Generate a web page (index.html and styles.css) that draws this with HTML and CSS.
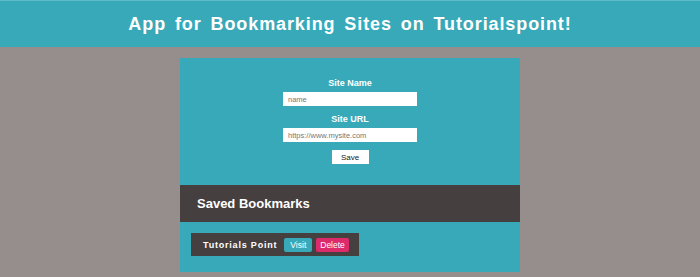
FILE: index.html
```html
<!DOCTYPE html>
<html lang="en">
<head>
    <meta charset="UTF-8">
    <meta name="viewport" content="width=device-width, initial-scale=1.0">
    <title>Bookmark App</title>
    <link rel="stylesheet" href="styles.css">
</head>
<body>
    <header>
        <h1>App for Bookmarking Sites on Tutorialspoint!</h1>
    </header>
    <div class="container">
        <form class="site-form">
            <label for="site-name">Site Name</label>
            <input type="text" id="site-name" placeholder="name">
            <label for="site-url">Site URL</label>
            <input type="text" id="site-url" placeholder="https://www.mysite.com">
            <button type="button" class="save-btn">Save</button>
        </form>
        <h2 class="saved-title">Saved Bookmarks</h2>
        <div class="bookmarks">
            <div class="bookmark">
                <span class="bookmark-name">Tutorials Point</span>
                <a class="visit-btn" href="#">Visit</a>
                <button type="button" class="delete-btn">Delete</button>
            </div>
        </div>
    </div>
</body>
</html>
```
FILE: styles.css
```css
body {
    font-family: "Liberation Sans", Arial, sans-serif;
    background-color: #968d8d;
    margin: 0;
    padding: 0;
}

header {
    background-color: #38a9b9;
    border-top: 1px solid #5dbcc9;
    height: 46px;
    display: flex;
    align-items: center;
    justify-content: center;
}

header h1 {
    margin: 0;
    color: white;
    font-size: 18px;
    letter-spacing: 0.9px;
    word-spacing: 3px;
}

.container {
    width: 340px;
    margin: 11px auto 0;
    background-color: #38a9b9;
    padding-bottom: 16px;
}

.site-form {
    display: flex;
    flex-direction: column;
    align-items: center;
    padding-top: 19px;
}

.site-form label {
    color: white;
    font-size: 9px;
    font-weight: bold;
    line-height: 12px;
    margin-bottom: 3px;
}

.site-form input {
    width: 134px;
    height: 14px;
    box-sizing: border-box;
    border: none;
    padding: 0 5px;
    font-family: inherit;
    font-size: 7.5px;
    margin-bottom: 7px;
}

.site-form input::placeholder {
    color: #777;
}

.save-btn {
    margin-top: 1px;
    width: 37px;
    height: 14px;
    border: none;
    background-color: white;
    color: #222;
    font-family: inherit;
    font-size: 8px;
    padding: 0;
}

.saved-title {
    margin: 21px 0 0;
    height: 37px;
    line-height: 37px;
    background-color: #463f3f;
    color: white;
    font-size: 13px;
    padding-left: 17px;
}

.bookmarks {
    padding: 11px 11px 0;
}

.bookmark {
    display: inline-flex;
    align-items: center;
    height: 23px;
    box-sizing: border-box;
    background-color: #463f3f;
    padding: 0 10px 0 12px;
}

.bookmark-name {
    color: white;
    font-size: 9px;
    font-weight: bold;
    letter-spacing: 0.8px;
    margin-right: 7px;
}

.visit-btn,
.delete-btn {
    height: 14px;
    line-height: 14px;
    padding: 0 4px;
    border: none;
    border-radius: 2px;
    color: white;
    font-family: inherit;
    font-size: 8.5px;
    text-decoration: none;
}

.visit-btn {
    background-color: #38a9b9;
    margin-right: 4px;
    padding: 0 6px;
}

.delete-btn {
    background-color: #dd2a6a;
}
```
